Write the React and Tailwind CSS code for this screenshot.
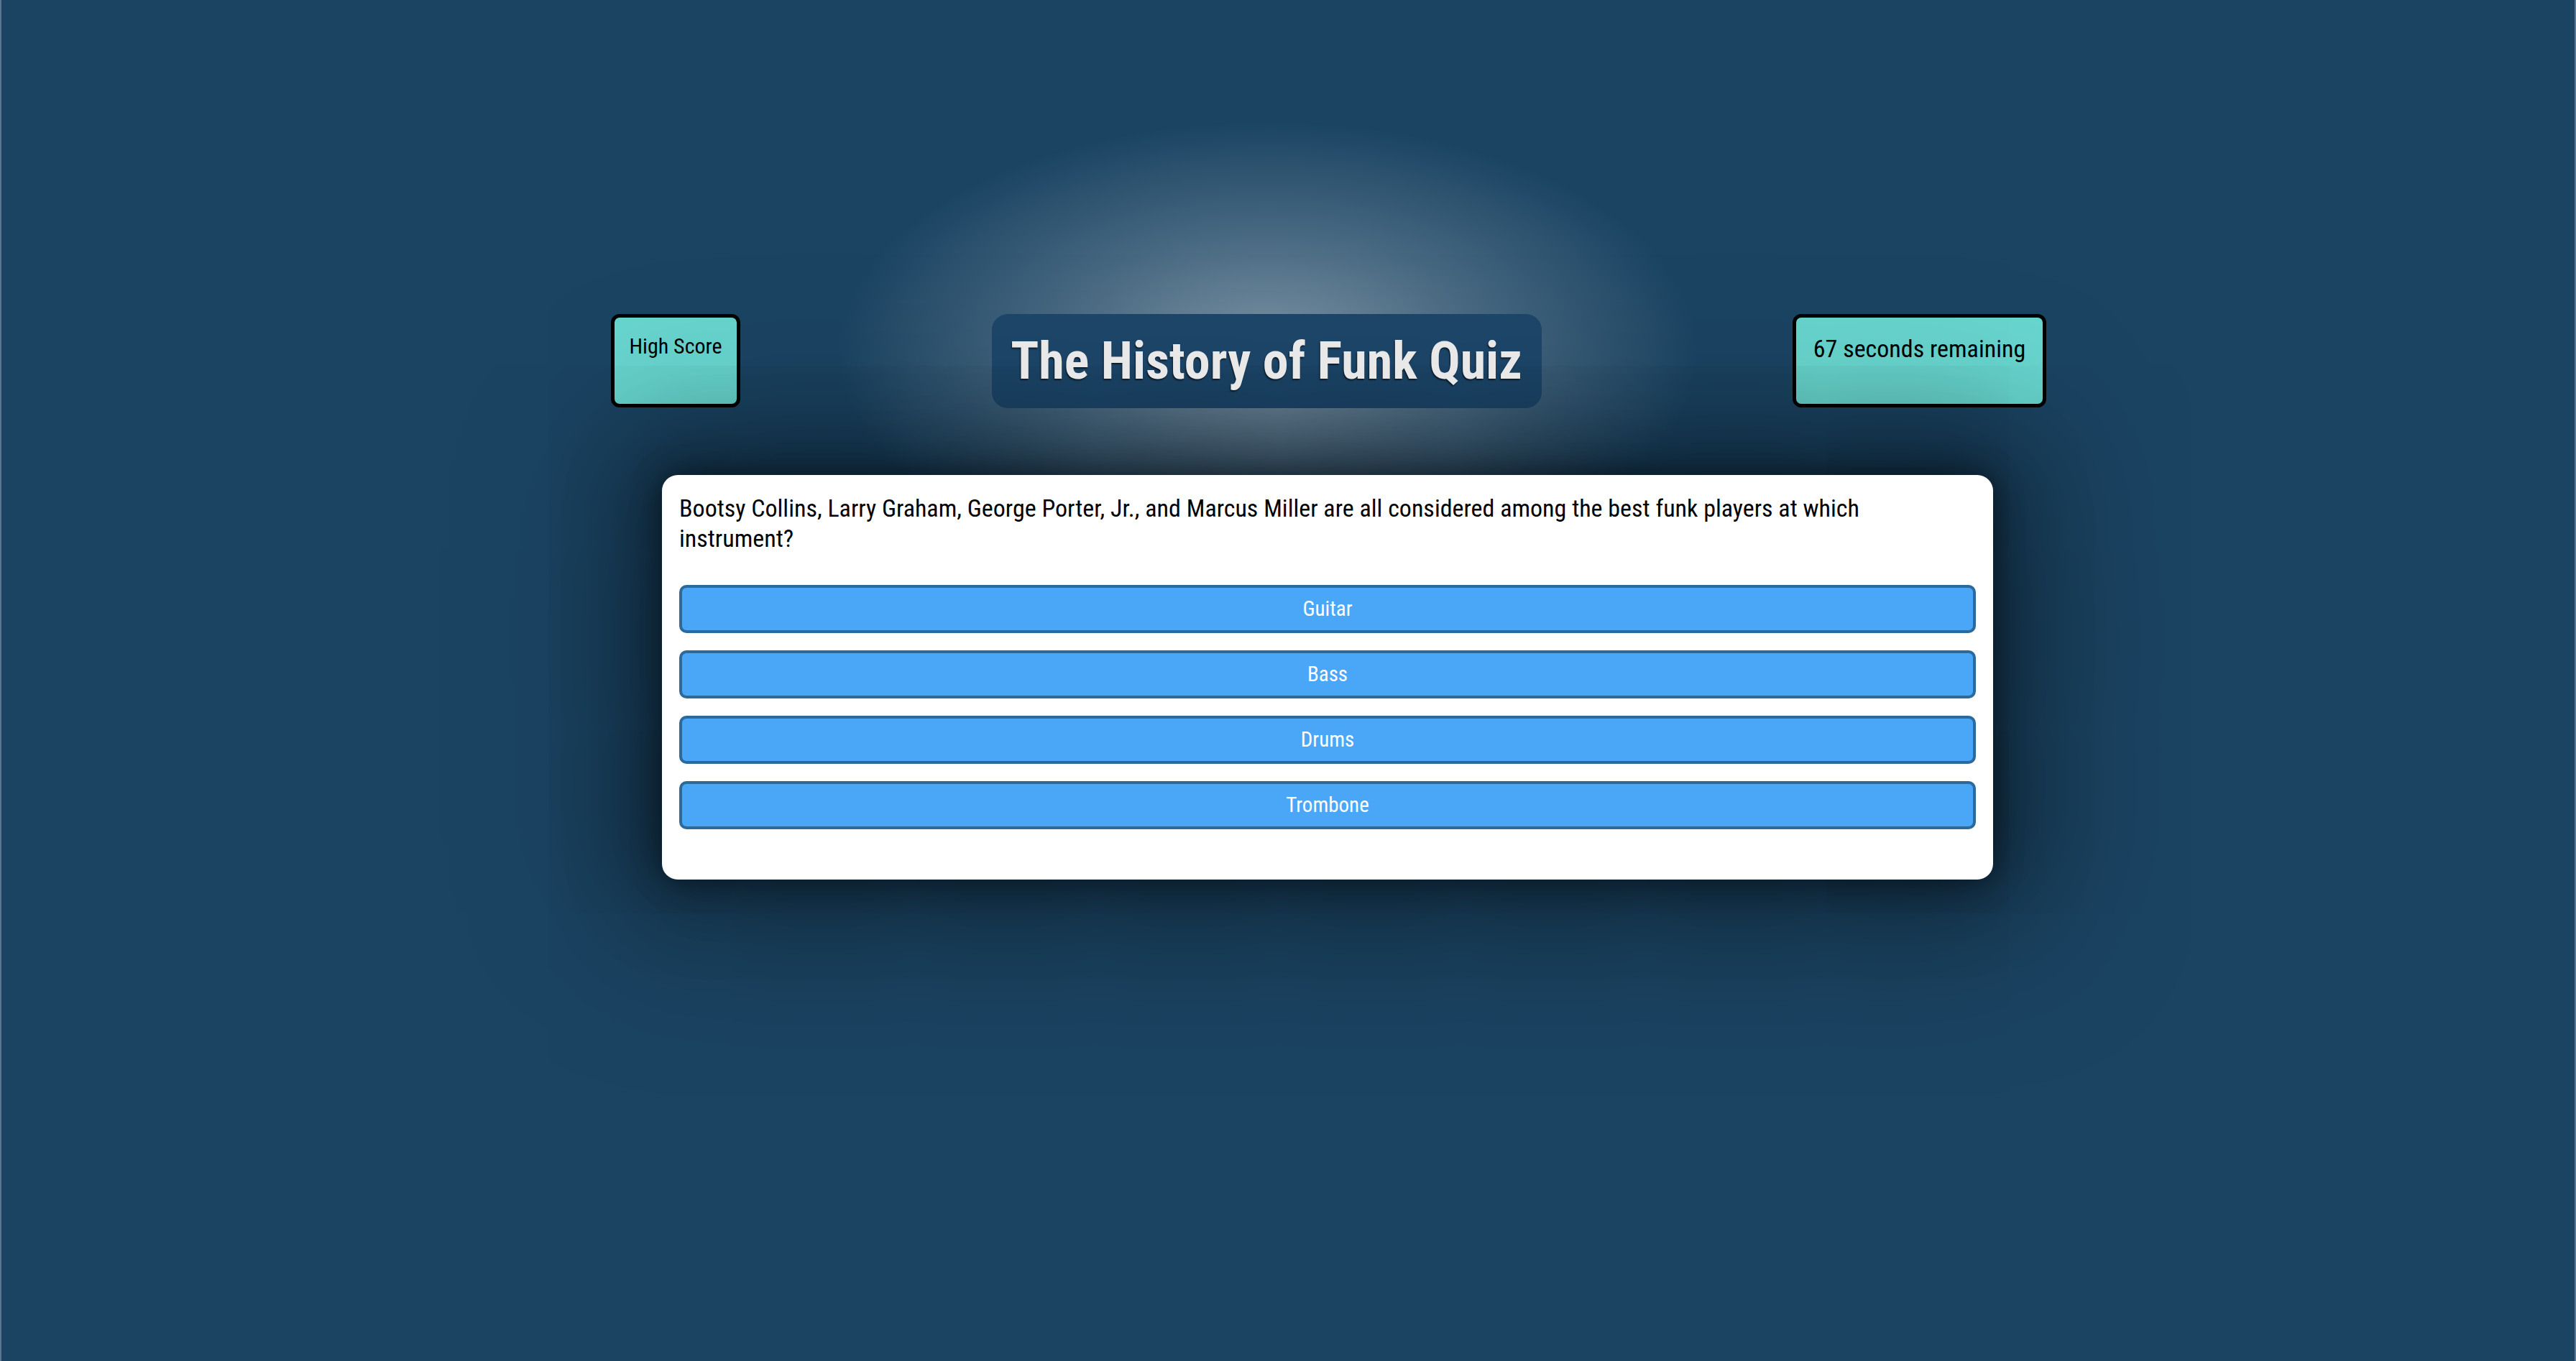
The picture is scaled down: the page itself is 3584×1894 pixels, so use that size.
import React from "react";

const answers = ["Guitar", "Bass", "Drums", "Trombone"];

const App = () => {
  return (
    <div className="min-h-screen w-full overflow-hidden border-x-2 border-[#5a7590] bg-[#1b4463] bg-[radial-gradient(ellipse_600px_320px_at_1762px_490px,rgba(255,255,255,0.44),rgba(255,255,255,0.2)_50%,rgba(255,255,255,0)_100%)] font-['Roboto_Condensed','Liberation_Sans',sans-serif]">
      <div className="pt-[437px] ml-[848px] w-[1997px] flex justify-between items-start">
        <div className="w-[180px] h-[130px] border-[5px] border-black rounded-[12px] bg-[#68d6cf] pt-[22px] text-center text-[30px] leading-[35px] text-black">
          High Score
        </div>

        <div className="w-[765px] h-[131px] rounded-[22px] bg-[#1d476b] flex items-center justify-center">
          <h1 className="relative z-10 text-[72px] font-bold text-[#e8e8e8] [text-shadow:-1px_2px_2px_rgba(0,0,0,0.6)]">
            The History of Funk Quiz
          </h1>
        </div>

        <div className="w-[353px] h-[130px] pt-[23px] border-[5px] border-black rounded-[12px] bg-[#68d6cf] text-center text-[34px] leading-[40px] text-black">
          67 seconds remaining
        </div>
      </div>

      <div className="relative ml-[919px] mt-[93px] w-[1852px] rounded-[22px] bg-white px-[24px] pt-[25px] pb-[70px] shadow-[0_0_40px_rgba(0,0,0,0.45),0_0_110px_20px_rgba(0,0,0,0.35),0_0_220px_80px_rgba(0,0,0,0.32)]">
        <p className="pr-[80px] text-[34px] leading-[42px] text-black mb-[44px]">
          Bootsy Collins, Larry Graham, George Porter, Jr., and Marcus Miller are all considered among the best funk players at which instrument?
        </p>
        <div className="flex flex-col gap-[24px]">
          {answers.map((answer) => (
            <button
              key={answer}
              className="h-[67px] w-full rounded-[10px] border-[4px] border-[#2d6a9c] bg-[#4aa7f8] text-[29px] text-white"
            >
              {answer}
            </button>
          ))}
        </div>
      </div>
    </div>
  );
};

export default App;
